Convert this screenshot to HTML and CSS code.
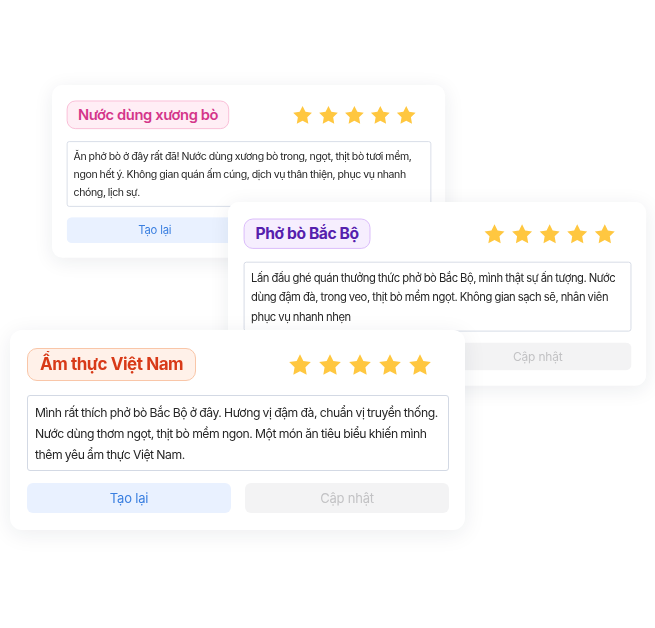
FILE: index.html
```html
<!doctype html>
<html lang="vi">
<head>
    <meta charset="UTF-8">
    <meta name="viewport" content="width=device-width, initial-scale=1.0">
    <title>Đánh giá</title>
    <link rel="stylesheet" href="styles.css">
</head>
<body>
    <div class="stage">
        <div class="card card-back">
            <div class="card-head">
                <span class="tag tag-pink">Nước dùng xương bò</span>
                <div class="stars">
                    <svg viewBox="0 0 24 24"><path d="M12 2l3.09 6.26L22 9.27l-5 4.87 1.18 6.88L12 17.77l-6.18 3.25L7 14.14 2 9.27l6.91-1.01L12 2z"/></svg>
                    <svg viewBox="0 0 24 24"><path d="M12 2l3.09 6.26L22 9.27l-5 4.87 1.18 6.88L12 17.77l-6.18 3.25L7 14.14 2 9.27l6.91-1.01L12 2z"/></svg>
                    <svg viewBox="0 0 24 24"><path d="M12 2l3.09 6.26L22 9.27l-5 4.87 1.18 6.88L12 17.77l-6.18 3.25L7 14.14 2 9.27l6.91-1.01L12 2z"/></svg>
                    <svg viewBox="0 0 24 24"><path d="M12 2l3.09 6.26L22 9.27l-5 4.87 1.18 6.88L12 17.77l-6.18 3.25L7 14.14 2 9.27l6.91-1.01L12 2z"/></svg>
                    <svg viewBox="0 0 24 24"><path d="M12 2l3.09 6.26L22 9.27l-5 4.87 1.18 6.88L12 17.77l-6.18 3.25L7 14.14 2 9.27l6.91-1.01L12 2z"/></svg>
                </div>
            </div>
            <div class="review">Ăn phở bò ở đây rất đã! Nước dùng xương bò trong, ngọt, thịt bò tươi mềm,<br>ngon hết ý. Không gian quán ấm cúng, dịch vụ thân thiện, phục vụ nhanh<br>chóng, lịch sự.</div>
            <div class="actions">
                <button class="btn btn-retry">Tạo lại</button>
                <button class="btn btn-update">Cập nhật</button>
            </div>
        </div>

        <div class="card card-mid">
            <div class="card-head">
                <span class="tag tag-purple">Phở bò Bắc Bộ</span>
                <div class="stars">
                    <svg viewBox="0 0 24 24"><path d="M12 2l3.09 6.26L22 9.27l-5 4.87 1.18 6.88L12 17.77l-6.18 3.25L7 14.14 2 9.27l6.91-1.01L12 2z"/></svg>
                    <svg viewBox="0 0 24 24"><path d="M12 2l3.09 6.26L22 9.27l-5 4.87 1.18 6.88L12 17.77l-6.18 3.25L7 14.14 2 9.27l6.91-1.01L12 2z"/></svg>
                    <svg viewBox="0 0 24 24"><path d="M12 2l3.09 6.26L22 9.27l-5 4.87 1.18 6.88L12 17.77l-6.18 3.25L7 14.14 2 9.27l6.91-1.01L12 2z"/></svg>
                    <svg viewBox="0 0 24 24"><path d="M12 2l3.09 6.26L22 9.27l-5 4.87 1.18 6.88L12 17.77l-6.18 3.25L7 14.14 2 9.27l6.91-1.01L12 2z"/></svg>
                    <svg viewBox="0 0 24 24"><path d="M12 2l3.09 6.26L22 9.27l-5 4.87 1.18 6.88L12 17.77l-6.18 3.25L7 14.14 2 9.27l6.91-1.01L12 2z"/></svg>
                </div>
            </div>
            <div class="review">Lấn đầu ghé quán thưởng thức phở bò Bắc Bộ, mình thật sự ấn tượng. Nước<br>dùng đậm đà, trong veo, thịt bò mềm ngọt. Không gian sạch sẽ, nhân viên<br>phục vụ nhanh nhẹn</div>
            <div class="actions">
                <button class="btn btn-retry">Tạo lại</button>
                <button class="btn btn-update">Cập nhật</button>
            </div>
        </div>

        <div class="card card-front">
            <div class="card-head">
                <span class="tag tag-orange">Ẩm thực Việt Nam</span>
                <div class="stars">
                    <svg viewBox="0 0 24 24"><path d="M12 2l3.09 6.26L22 9.27l-5 4.87 1.18 6.88L12 17.77l-6.18 3.25L7 14.14 2 9.27l6.91-1.01L12 2z"/></svg>
                    <svg viewBox="0 0 24 24"><path d="M12 2l3.09 6.26L22 9.27l-5 4.87 1.18 6.88L12 17.77l-6.18 3.25L7 14.14 2 9.27l6.91-1.01L12 2z"/></svg>
                    <svg viewBox="0 0 24 24"><path d="M12 2l3.09 6.26L22 9.27l-5 4.87 1.18 6.88L12 17.77l-6.18 3.25L7 14.14 2 9.27l6.91-1.01L12 2z"/></svg>
                    <svg viewBox="0 0 24 24"><path d="M12 2l3.09 6.26L22 9.27l-5 4.87 1.18 6.88L12 17.77l-6.18 3.25L7 14.14 2 9.27l6.91-1.01L12 2z"/></svg>
                    <svg viewBox="0 0 24 24"><path d="M12 2l3.09 6.26L22 9.27l-5 4.87 1.18 6.88L12 17.77l-6.18 3.25L7 14.14 2 9.27l6.91-1.01L12 2z"/></svg>
                </div>
            </div>
            <div class="review">Mình rất thích phở bò Bắc Bộ ở đây. Hương vị đậm đà, chuẩn vị truyền thống.<br>Nước dùng thơm ngọt, thịt bò mềm ngon. Một món ăn tiêu biểu khiến mình<br>thêm yêu ẩm thực Việt Nam.</div>
            <div class="actions">
                <button class="btn btn-retry">Tạo lại</button>
                <button class="btn btn-update">Cập nhật</button>
            </div>
        </div>
    </div>
</body>
</html>
```

FILE: styles.css
```css
* {
    padding: 0;
    margin: 0;
    box-sizing: border-box;
}
body {
    background: #fff;
    font-family: Inter, "Noto Sans", sans-serif;
    color: #2b2b2b;
}
.stage {
    position: relative;
    width: 655px;
    height: 628px;
    overflow: hidden;
}

/* the three cards are the same card, stacked like windows */
.card {
    position: absolute;
    width: 455px;
    height: 200px;
    padding: 18px 16px 17px 17px;
    display: flex;
    flex-direction: column;
    background: #fff;
    border-radius: 12px;
    box-shadow: 0 4px 22px rgba(30, 40, 60, 0.08);
    transform-origin: top left;
}
.card-back {
    left: 52px;
    top: 85px;
    transform: scale(0.864);
}
.card-mid {
    left: 228px;
    top: 202px;
    transform: scale(0.919);
}
.card-front {
    left: 10px;
    top: 330px;
}

.card-head {
    display: flex;
    align-items: center;
    justify-content: space-between;
}
.tag {
    display: inline-block;
    padding: 5px 12px;
    border: 1px solid;
    border-radius: 10px;
    font-size: 17px;
    font-weight: 700;
    line-height: 21px;
    letter-spacing: -0.45px;
}
.tag-pink {
    color: #d4368a;
    background: #ffeef5;
    border-color: #f8b6d2;
    font-weight: 600;
}
.tag-purple {
    color: #5520ad;
    background: #f6eefe;
    border-color: #d8b7fa;
}
.tag-orange {
    color: #d83a18;
    background: #fff1e9;
    border-color: #f9c6a8;
}
.stars {
    display: flex;
    gap: 4px;
    margin-right: 16px;
}
.stars svg {
    width: 26px;
    height: 26px;
    fill: #ffc740;
}

.review {
    margin-top: 14px;
    height: 76px;
    padding: 6px 5px 5px 7px;
    border: 1px solid #d3d9e4;
    border-radius: 3px;
    font-size: 12.2px;
    line-height: 21px;
    letter-spacing: -0.45px;
    word-spacing: -0.3px;
    white-space: nowrap;
    overflow: hidden;
    color: #262626;
}

.actions {
    margin-top: 12px;
    display: flex;
    gap: 14px;
}
.btn {
    flex: 1;
    height: 30px;
    border: none;
    border-radius: 6px;
    font-family: inherit;
    font-size: 13px;
    letter-spacing: -0.2px;
}
.btn-retry {
    background: #e9f1ff;
    color: #3a7fe0;
}
.btn-update {
    background: #f3f3f4;
    color: #c2c2c4;
}
```
